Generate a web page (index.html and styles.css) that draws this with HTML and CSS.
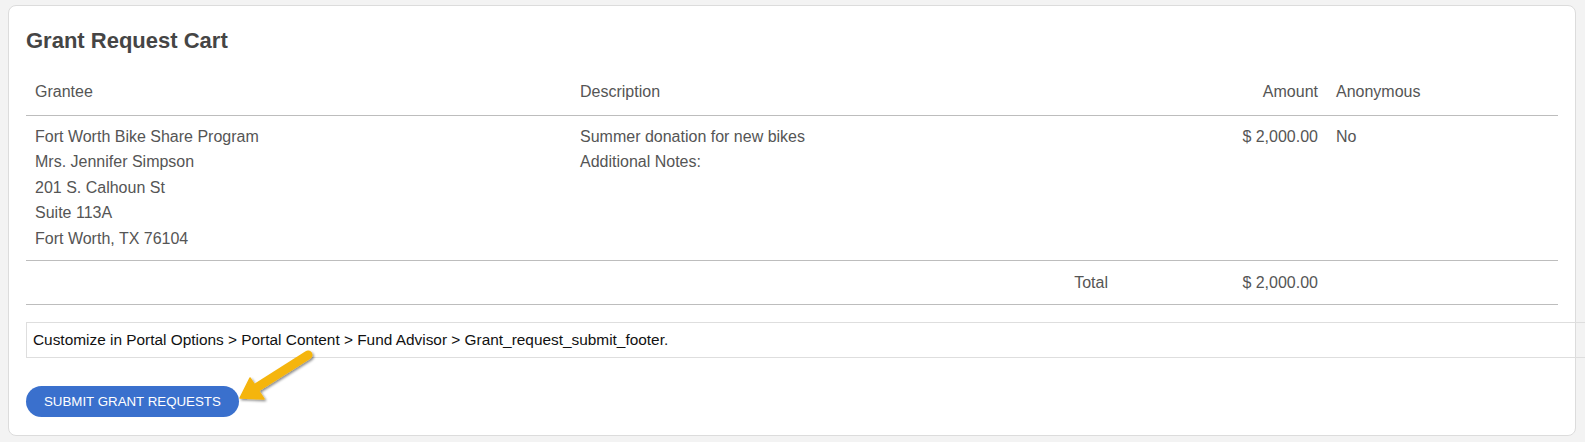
FILE: index.html
```html
<!DOCTYPE html>
<html lang="en">
<head>
<meta charset="utf-8">
<title>Grant Request Cart</title>
<link rel="stylesheet" href="styles.css">
</head>
<body>
<div class="card">
  <h2 class="title">Grant Request Cart</h2>
  <table class="cart">
    <colgroup>
      <col class="c-grantee">
      <col class="c-desc">
      <col class="c-amount">
      <col class="c-anon">
    </colgroup>
    <thead>
      <tr>
        <th>Grantee</th>
        <th>Description</th>
        <th class="num">Amount</th>
        <th>Anonymous</th>
      </tr>
    </thead>
    <tbody>
      <tr>
        <td>Fort Worth Bike Share Program<br>Mrs. Jennifer Simpson<br>201 S. Calhoun St<br>Suite 113A<br>Fort Worth, TX 76104</td>
        <td>Summer donation for new bikes<br>Additional Notes:</td>
        <td class="num">$ 2,000.00</td>
        <td>No</td>
      </tr>
      <tr class="total">
        <td colspan="2" class="num">Total</td>
        <td class="num">$ 2,000.00</td>
        <td></td>
      </tr>
    </tbody>
  </table>
  <div class="footer-note">Customize in Portal Options &gt; Portal Content &gt; Fund Advisor &gt; Grant_request_submit_footer.</div>
  <div class="actions">
    <button class="submit" type="button">SUBMIT GRANT REQUESTS</button>
    <svg class="arrow" width="90" height="70" viewBox="0 0 90 70" aria-hidden="true">
      <defs>
        <filter id="sh" x="-30%" y="-30%" width="160%" height="160%">
          <feDropShadow dx="1.5" dy="1.5" stdDeviation="1.3" flood-color="#000" flood-opacity="0.45"/>
        </filter>
      </defs>
      <g filter="url(#sh)" fill="#f5b50f" stroke="#f5b50f">
        <line x1="77" y1="12" x2="25" y2="45" stroke-width="9" stroke-linecap="round"/>
        <polygon points="9,55 19,35 33,56" stroke-width="1.5" stroke-linejoin="round"/>
      </g>
    </svg>
  </div>
</div>
</body>
</html>
```
FILE: styles.css
```css
html, body {
  margin: 0;
  padding: 0;
  background: #f3f3f3;
  overflow-x: hidden;
}

body {
  font-family: "Liberation Sans", Arial, sans-serif;
  color: #555;
}

.card {
  margin: 5px 9px 0 8px;
  background: #fff;
  border: 1px solid #dcdcdc;
  border-radius: 8px;
  padding: 22px 17px 18px;
}

.title {
  margin: 0 0 15px;
  font-size: 22px;
  line-height: 26px;
  font-weight: bold;
  color: #454545;
}

.cart {
  width: 100%;
  border-collapse: collapse;
  table-layout: fixed;
  font-size: 16px;
  line-height: 25.6px;
}

.c-grantee { width: 545px; }
.c-desc { width: 546px; }
.c-amount { width: 210px; }
.c-anon { width: 231px; }

.cart th {
  font-weight: normal;
  text-align: left;
  padding: 10px 9px 10px;
  border-bottom: 1px solid #bdbdbd;
  vertical-align: bottom;
}

.cart td {
  padding: 8px 9px;
  vertical-align: top;
  border-bottom: 1px solid #bdbdbd;
}

.cart .total td {
  padding: 9px 9px;
}

.cart .num {
  text-align: right;
}

.footer-note {
  margin-top: 17px;
  width: 1559px;
  box-sizing: border-box;
  border: 1px solid #dedede;
  border-right: none;
  padding: 7px 6px;
  font-size: 15.4px;
  line-height: 20px;
  color: #111;
}

.actions {
  position: relative;
  margin-top: 28px;
  height: 31px;
}

.submit {
  display: block;
  height: 31px;
  padding: 0 18px;
  border: none;
  border-radius: 16px;
  background: #3a70cd;
  color: #fff;
  font-family: "Liberation Sans", Arial, sans-serif;
  font-size: 13.3px;
  line-height: 31px;
}

.arrow {
  position: absolute;
  left: 205px;
  top: -43px;
}
```
